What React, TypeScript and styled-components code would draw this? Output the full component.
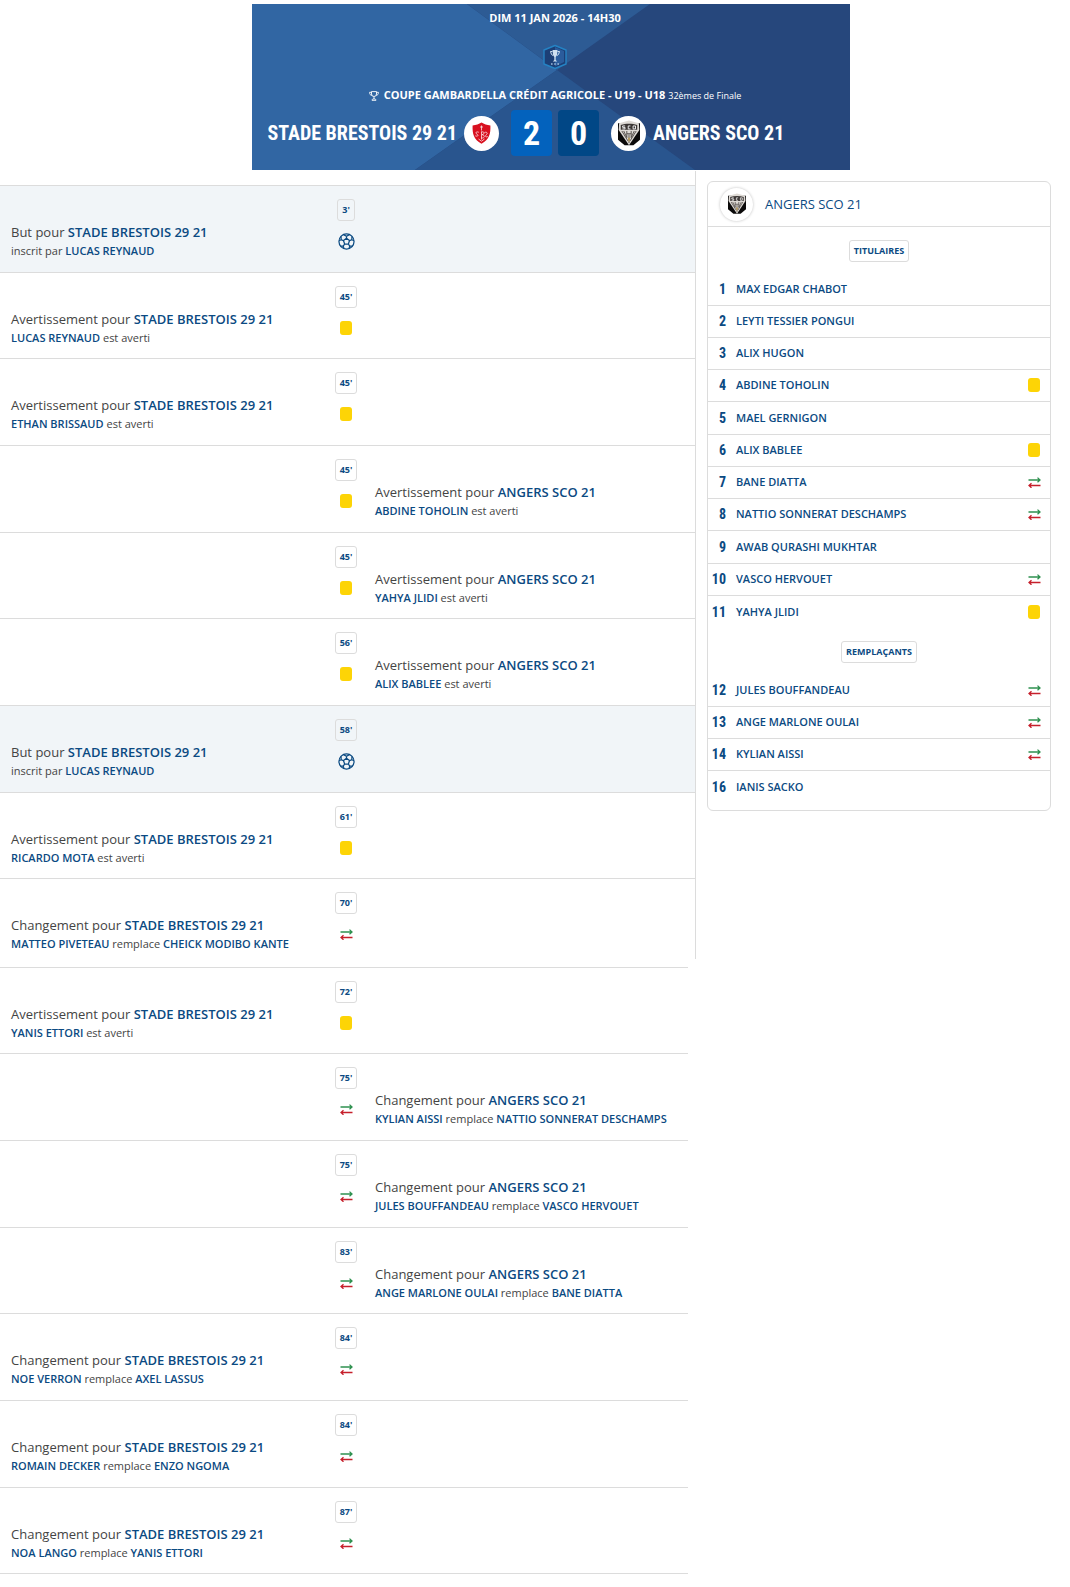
import React from "react";
import styled, { createGlobalStyle } from "styled-components";

const navy = "#0b4a82";
const line = "#dcdcdc";
const sans = `"Open Sans", "Noto Sans", sans-serif`;
const narrow = `"Roboto Condensed", "Liberation Sans Narrow", "Liberation Sans", sans-serif`;

const Global = createGlobalStyle`
  *, *::before, *::after { box-sizing: border-box; }
  body { margin: 0; background: #fff; color: #444; font-family: ${sans}; }
  ul, ol, h1, h2, h3, p { margin: 0; padding: 0; list-style: none; font-weight: 400; }
  svg { display: block; flex: none; }
`;

const Page = styled.div`
  padding: 4px 0 12px;
`;

/* Scoreboard */
const BoardShell = styled.div`
  padding-left: 32px;
`;
const Board = styled.header`
  position: relative;
  isolation: isolate;
  max-width: 598px;
  min-height: 166px;
  margin: 0 auto;
  padding: 5px 0 14px 8px;
  display: flex;
  flex-direction: column;
  align-items: center;
  color: #fff;
  background: #26477c;
`;
const Backdrop = styled.svg`
  position: absolute;
  inset: 0;
  width: 100%;
  height: 100%;
  z-index: -1;
`;
const DateLine = styled.p`
  font-size: 11px;
  line-height: 18px;
  font-weight: 700;
`;
const CupBox = styled.div`
  padding: 17px 0 15px;
`;
const Competition = styled.p`
  display: flex;
  align-items: center;
  gap: 5px;
  font-size: 11px;
  line-height: 20px;
`;
const Round = styled.span`
  font-size: 9px;
`;
const ScoreRow = styled.div`
  width: 100%;
  margin-top: 4px;
  display: grid;
  grid-template-columns: minmax(0, 1fr) auto minmax(0, 1fr);
  align-items: center;
  column-gap: 12px;
`;
const Team = styled.h2<{ $home?: boolean }>`
  display: flex;
  flex-direction: ${(p) => (p.$home ? "row-reverse" : "row")};
  align-items: center;
  gap: 7px;
  font-family: ${narrow};
  font-size: 20px;
  line-height: 46px;
  font-weight: 700;
  white-space: nowrap;
`;
const Crest = styled.span<{ $outlined?: boolean }>`
  flex: none;
  width: ${(p) => (p.$outlined ? 33 : 35)}px;
  height: ${(p) => (p.$outlined ? 33 : 35)}px;
  display: flex;
  align-items: center;
  justify-content: center;
  border-radius: 50%;
  background: #fff;
  box-shadow: ${(p) => (p.$outlined ? "0 0 3px rgba(0, 0, 0, 0.25)" : "none")};
`;
const Scores = styled.div`
  display: flex;
  gap: 6px;
`;
const Score = styled.span<{ $winner?: boolean }>`
  width: 41px;
  height: 46px;
  border-radius: 4px;
  background: ${(p) => (p.$winner ? "#0362bd" : "#014786")};
  font-family: ${narrow};
  font-size: 34px;
  line-height: 46px;
  font-weight: 700;
  text-align: center;
`;

/* Timeline */
const Columns = styled.main`
  display: grid;
  grid-template-columns: minmax(0, 1fr) 374px;
  align-items: start;
  margin-top: 1px;
`;
const FirstEvents = styled.ol`
  padding-top: 14px;
  border-right: 1px solid ${line};
`;
const LaterEvents = styled.ol`
  margin: 8px 8px 0 0;
  border-bottom: 1px solid ${line};
`;
const EventRow = styled.li<{ $goal?: boolean }>`
  display: grid;
  grid-template-columns: minmax(0, 320px) 52px minmax(0, 1fr);
  height: 87px;
  border-top: 1px solid ${line};
  background: ${(p) => (p.$goal ? "#f1f5f8" : "transparent")};
  ${FirstEvents} > &:nth-child(3n + 2),
  ${LaterEvents} > &:nth-child(3n + 1) { height: 86px; }
  ${FirstEvents} > &:last-child { height: 81px; }
`;
const Marker = styled.div`
  grid-column: 2;
  grid-row: 1;
  padding-top: 13px;
  display: flex;
  flex-direction: column;
  align-items: center;
  gap: 12px;
`;
const Tag = styled.span`
  height: 22px;
  padding: 0 4px;
  border: 1px solid ${line};
  border-radius: 3px;
  color: ${navy};
  font-size: 9px;
  line-height: 20px;
  font-weight: 700;
`;
const IconBox = styled.span`
  width: 16px;
  height: 16px;
  flex: none;
  display: flex;
  align-items: center;
  justify-content: center;
`;
const Card = styled.span`
  width: 12px;
  height: 14px;
  border-radius: 3px;
  background: #fdd406;
`;
const Text = styled.div<{ $home: boolean }>`
  grid-column: ${(p) => (p.$home ? 1 : 3)};
  grid-row: 1;
  padding: 37px 0 0 ${(p) => (p.$home ? 11 : 3)}px;
  white-space: nowrap;
  strong { color: ${navy}; }
`;
const Title = styled.h3`
  font-size: 13px;
  line-height: 18px;
  strong { font-weight: 600; }
`;
const Detail = styled.p`
  font-size: 11px;
  line-height: 20px;
  strong { font-weight: 650; }
`;

/* Line-up */
const Aside = styled.aside`
  padding: 10px 19px 0 11px;
`;
const Panel = styled.section`
  border: 1px solid ${line};
  border-radius: 6px;
  padding-bottom: 7px;
`;
const PanelHead = styled.header`
  height: 45px;
  padding-left: 12px;
  display: flex;
  align-items: center;
  gap: 12px;
  border-bottom: 1px solid ${line};
`;
const PanelTitle = styled.h2`
  color: ${navy};
  font-size: 13px;
`;
const Group = styled.h3`
  display: flex;
  justify-content: center;
  padding: 13px 0 12px;
`;
const Player = styled.li`
  height: 32px;
  display: grid;
  grid-template-columns: 18px minmax(0, 1fr) 16px;
  align-items: center;
  column-gap: 10px;
  padding: 0 8px 1px 0;
  border-bottom: 1px solid ${line};
  color: ${navy};
  font-size: 11px;
  line-height: 16px;
  font-weight: 650;
  &:nth-child(4n + 5) { height: 33px; }
  &:last-child { border-bottom: 0; }
`;
const Shirt = styled.span`
  text-align: right;
  font-family: ${narrow};
  font-size: 14px;
  font-weight: 700;
`;

const SwapIcon = () => (
  <svg width="13" height="11" viewBox="0 0 13 11" fill="none" strokeWidth="1.3" role="img" aria-label="Changement">
    <path d="M0.5 3H12M9.5 0.6 12 3 9.5 5.2" stroke="#2f9150" />
    <path d="M12.5 8.5H1M3.5 6.2 1 8.5 3.5 10.8" stroke="#c6202c" />
  </svg>
);

const BallIcon = () => (
  <svg width="17" height="17" viewBox="0 0 18 18" fill="none" stroke={navy} strokeWidth="1.3" strokeLinejoin="round" role="img" aria-label="But">
    <circle cx="9" cy="9" r="8" />
    <path d="M9 5.6 12.2 8 11 11.7H7L5.8 8Z" />
    <path d="M9 5.6V3.4M12.2 8l2.4-.9M11 11.7l1.5 2.1M7 11.7l-1.5 2.1M5.8 8 3.4 7.1" />
    <path d="M5.8 1.7 9 3.4l3.2-1.7M16.9 8.2 14.6 7.1 14.8 3.6M15.4 13.8l-2.9 0-.9 2.8M2.6 13.8l2.9 0 .9 2.8M1.1 8.2 3.4 7.1 3.2 3.6" />
  </svg>
);

const CupIcon = () => (
  <svg width="26" height="26" viewBox="0 0 26 26" role="img" aria-label="Coupe Gambardella">
    <path d="M13 1.5 24 6V20L13 24.500 2 20V6Z" fill="#1c3f76" stroke="#2583c4" strokeWidth="1.400" strokeLinejoin="round" />
    <path d="M13 3 22 7V18L13 22.500Z" fill="#2b5c9c" />
    <path d="M10.500 6h5l-.5 5-1.300 2v3l1.500 1.500h-4.400l1.500-1.500v-3l-1.300-2Z" fill="#cfe0f0" />
    <path d="M10.500 7.500H8.500l1 3 1.600 1M15.500 7.500h2l-1 3-1.600 1" fill="none" stroke="#cfe0f0" />
    <path d="M9 20h1.600M12.200 20h1.600M15.400 20H17" stroke="#9dbbdc" strokeWidth="1.500" />
  </svg>
);

const TrophyIcon = () => (
  <svg width="10" height="10" viewBox="0 0 10 10" fill="none" stroke="#fff" strokeWidth="0.900" aria-hidden="true">
    <path d="M2.500.6h5V3a2.500 2.500 0 0 1-5 0ZM2.500 1.300H.6c0 2 .8 3 2.200 3M7.500 1.300h1.900c0 2-.8 3-2.200 3M5 5.600V8M3 9.300c0-1 .8-1.400 2-1.400s2 .4 2 1.400Z" />
  </svg>
);

const BrestCrest = () => (
  <svg width="19" height="22" viewBox="0 0 19 22" role="img" aria-label="Stade Brestois">
    <path d="M.6 3.500C4 3 7 2.200 9.500.5 12 2.200 15 3 18.400 3.500c.3 8-1 14-8.900 18.200C1.600 17.500.3 11.500.6 3.500Z" fill="#d8101f" />
    <path d="M9.500 3.500v5M8 5h3M6.800 10.300c-2.300-1.200-4 .6-2 1.700s1.300 3-1.500 1.800M9.500 9.500v8M9.500 10c3-1 3.500 2.300.6 2.700 3.400.4 2.600 4-.6 3.200M12.500 10.500c2.500-1 3.500 1 2 2s-1.200 3.300 1.300 2M6.500 17l3 2.200 3-2.200" fill="none" stroke="#fff" strokeWidth=".7" />
  </svg>
);

const AngersCrest = ({ size }: { size: number }) => (
  <svg width={size} height={size * 1.2} viewBox="0 0 20 24" role="img" aria-label="Angers SCO">
    <path d="M0 3h20v15l-6 5H6l-6-5Z" fill="#0b0a0a" />
    <path d="M10 .5 19 3l.4 6L10 23 .6 9 1 3Z" fill="#dedad5" />
    <path d="M2.500 4.500C7 3 13 3 17.500 4.500v4.300h-15Z" fill="#3a3533" />
    <path d="M6.500 5.400H4.200v1.300h2.200v1.400H4M11.300 5.400h-2v2.700h2M13.700 5.400h2.200v2.700h-2.200Z" fill="none" stroke="#fff" strokeWidth=".8" />
    <path d="M5.200 10 8 16V10M14.800 10 12 16V10M8 12.500h4M10 13v8M3.500 10l5.500 9M16.500 10 11 19" fill="none" stroke="#4a4441" strokeWidth=".8" />
    <path d="m9 17 1-1.500 1 1.500-1 3.500Z" fill="#b79a5b" />
  </svg>
);

type Kind = "goal" | "card" | "swap";
const KIND_LABEL = { card: "Avertissement", swap: "Changement", goal: "But" };
const HOME = "STADE BRESTOIS 29 21";
const AWAY = "ANGERS SCO 21";

interface MatchEvent {
  minute: number;
  kind: Kind;
  home: boolean;
  player: string;
  replaced?: string;
}
const ev = (minute: number, kind: Kind, home: boolean, player: string, replaced?: string): MatchEvent => ({
  minute, kind, home, player, replaced,
});

const firstEvents = [
  ev(3, "goal", true, "LUCAS REYNAUD"),
  ev(45, "card", true, "LUCAS REYNAUD"),
  ev(45, "card", true, "ETHAN BRISSAUD"),
  ev(45, "card", false, "ABDINE TOHOLIN"),
  ev(45, "card", false, "YAHYA JLIDI"),
  ev(56, "card", false, "ALIX BABLEE"),
  ev(58, "goal", true, "LUCAS REYNAUD"),
  ev(61, "card", true, "RICARDO MOTA"),
  ev(70, "swap", true, "MATTEO PIVETEAU", "CHEICK MODIBO KANTE"),
];
const laterEvents = [
  ev(72, "card", true, "YANIS ETTORI"),
  ev(75, "swap", false, "KYLIAN AISSI", "NATTIO SONNERAT DESCHAMPS"),
  ev(75, "swap", false, "JULES BOUFFANDEAU", "VASCO HERVOUET"),
  ev(83, "swap", false, "ANGE MARLONE OULAI", "BANE DIATTA"),
  ev(84, "swap", true, "NOE VERRON", "AXEL LASSUS"),
  ev(84, "swap", true, "ROMAIN DECKER", "ENZO NGOMA"),
  ev(87, "swap", true, "NOA LANGO", "YANIS ETTORI"),
];

type PlayerData = [number, string, Kind?];
const starters: PlayerData[] = [
  [1, "MAX EDGAR CHABOT"],
  [2, "LEYTI TESSIER PONGUI"],
  [3, "ALIX HUGON"],
  [4, "ABDINE TOHOLIN", "card"],
  [5, "MAEL GERNIGON"],
  [6, "ALIX BABLEE", "card"],
  [7, "BANE DIATTA", "swap"],
  [8, "NATTIO SONNERAT DESCHAMPS", "swap"],
  [9, "AWAB QURASHI MUKHTAR"],
  [10, "VASCO HERVOUET", "swap"],
  [11, "YAHYA JLIDI", "card"],
];
const substitutes: PlayerData[] = [
  [12, "JULES BOUFFANDEAU", "swap"],
  [13, "ANGE MARLONE OULAI", "swap"],
  [14, "KYLIAN AISSI", "swap"],
  [16, "IANIS SACKO"],
];

const KindIcon = ({ kind }: { kind: Kind }) => (
  <IconBox>
    {kind === "goal" && <BallIcon />}
    {kind === "card" && <Card role="img" aria-label="Carton jaune" />}
    {kind === "swap" && <SwapIcon />}
  </IconBox>
);

const EventItem = ({ event }: { event: MatchEvent }) => (
  <EventRow $goal={event.kind === "goal"}>
    <Marker>
      <Tag>{event.minute}'</Tag>
      <KindIcon kind={event.kind} />
    </Marker>
    <Text $home={event.home}>
      <Title>
        {KIND_LABEL[event.kind]} pour <strong>{event.home ? HOME : AWAY}</strong>
      </Title>
      <Detail>
        {event.kind === "goal" && "inscrit par "}
        <strong>{event.player}</strong>
        {event.kind === "card" && " est averti"}
        {event.kind === "swap" && " remplace "}
        {event.replaced && <strong>{event.replaced}</strong>}
      </Detail>
    </Text>
  </EventRow>
);

const PlayerList = ({ players }: { players: PlayerData[] }) => (
  <ul>
    {players.map(([shirt, name, kind]) => (
      <Player key={shirt}>
        <Shirt>{shirt}</Shirt>
        <span>{name}</span>
        {kind && <KindIcon kind={kind} />}
      </Player>
    ))}
  </ul>
);

export default function App() {
  return (
    <Page>
      <Global />
      <BoardShell>
        <Board>
          <Backdrop viewBox="0 0 598 166" preserveAspectRatio="none" aria-hidden="true">
            <path d="M0 0H215L305 66 163 166H0Z" fill="#3166a3" />
            <path d="M215 0H398L305 66Z" fill="#2d5b94" />
            <path d="M305 66 443 166H163Z" fill="#29558e" />
          </Backdrop>
          <DateLine>DIM 11 JAN 2026 - 14H30</DateLine>
          <CupBox><CupIcon /></CupBox>
          <Competition>
            <TrophyIcon />
            <span>
              <strong>COUPE GAMBARDELLA CRÉDIT AGRICOLE - U19 - U18</strong> <Round>32èmes de Finale</Round>
            </span>
          </Competition>
          <ScoreRow>
            <Team $home>
              <Crest><BrestCrest /></Crest>
              {HOME}
            </Team>
            <Scores>
              <Score $winner>2</Score>
              <Score>0</Score>
            </Scores>
            <Team>
              <Crest><AngersCrest size={22} /></Crest>
              {AWAY}
            </Team>
          </ScoreRow>
        </Board>
      </BoardShell>
      <Columns>
        <div>
          <FirstEvents>
            {firstEvents.map((event, i) => <EventItem key={i} event={event} />)}
          </FirstEvents>
          <LaterEvents>
            {laterEvents.map((event, i) => <EventItem key={i} event={event} />)}
          </LaterEvents>
        </div>
        <Aside>
          <Panel>
            <PanelHead>
              <Crest $outlined><AngersCrest size={18} /></Crest>
              <PanelTitle>{AWAY}</PanelTitle>
            </PanelHead>
            <Group><Tag>TITULAIRES</Tag></Group>
            <PlayerList players={starters} />
            <Group><Tag>REMPLAÇANTS</Tag></Group>
            <PlayerList players={substitutes} />
          </Panel>
        </Aside>
      </Columns>
    </Page>
  );
}
